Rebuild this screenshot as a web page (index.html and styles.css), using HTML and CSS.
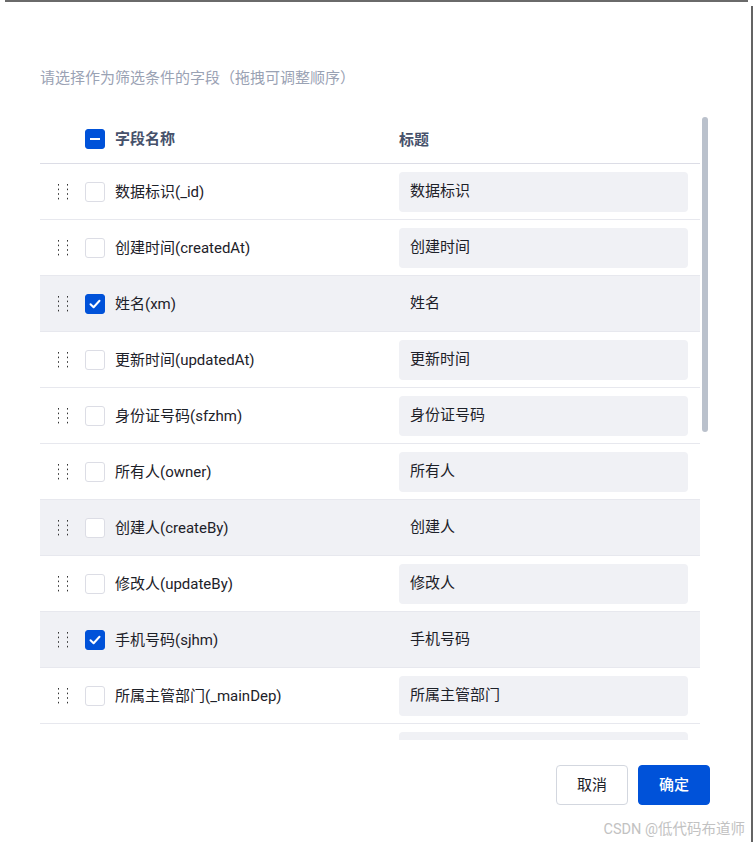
FILE: index.html
```html
<!DOCTYPE html>
<html lang="zh-CN">
<head>
    <meta charset="UTF-8">
    <meta name="viewport" content="width=device-width, initial-scale=1.0">
    <title>筛选字段设置</title>
    <link rel="stylesheet" href="styles.css">
</head>
<body>
    <div class="topline"></div>
    <div class="frame">
        <div class="dialog">
            <p class="hint">请选择作为筛选条件的字段（拖拽可调整顺序）</p>

            <div class="list-wrap">
                <div class="field-list">
                    <div class="row head">
                        <span class="handle-space"></span>
                        <span class="check indeterminate"><i></i></span>
                        <span class="name">字段名称</span>
                        <span class="title-col">标题</span>
                    </div>

                    <div class="row">
                        <span class="handle"><svg width="12" height="18" viewBox="0 0 12 18"><g fill="#333"><rect x="1" y="1" width="1" height="1.6"/><rect x="1" y="5.6" width="1" height="1.6"/><rect x="1" y="10.2" width="1" height="1.6"/><rect x="1" y="14.8" width="1" height="1.6"/><rect x="10" y="1" width="1" height="1.6"/><rect x="10" y="5.6" width="1" height="1.6"/><rect x="10" y="10.2" width="1" height="1.6"/><rect x="10" y="14.8" width="1" height="1.6"/></g></svg></span>
                        <span class="check"></span>
                        <span class="name">数据标识(_id)</span>
                        <span class="title-col"><span class="title-input">数据标识</span></span>
                    </div>
                    <div class="row">
                        <span class="handle"><svg width="12" height="18" viewBox="0 0 12 18"><g fill="#333"><rect x="1" y="1" width="1" height="1.6"/><rect x="1" y="5.6" width="1" height="1.6"/><rect x="1" y="10.2" width="1" height="1.6"/><rect x="1" y="14.8" width="1" height="1.6"/><rect x="10" y="1" width="1" height="1.6"/><rect x="10" y="5.6" width="1" height="1.6"/><rect x="10" y="10.2" width="1" height="1.6"/><rect x="10" y="14.8" width="1" height="1.6"/></g></svg></span>
                        <span class="check"></span>
                        <span class="name">创建时间(createdAt)</span>
                        <span class="title-col"><span class="title-input">创建时间</span></span>
                    </div>
                    <div class="row active">
                        <span class="handle"><svg width="12" height="18" viewBox="0 0 12 18"><g fill="#333"><rect x="1" y="1" width="1" height="1.6"/><rect x="1" y="5.6" width="1" height="1.6"/><rect x="1" y="10.2" width="1" height="1.6"/><rect x="1" y="14.8" width="1" height="1.6"/><rect x="10" y="1" width="1" height="1.6"/><rect x="10" y="5.6" width="1" height="1.6"/><rect x="10" y="10.2" width="1" height="1.6"/><rect x="10" y="14.8" width="1" height="1.6"/></g></svg></span>
                        <span class="check checked"><svg width="12" height="10" viewBox="0 0 12 10"><path d="M1.5 5.2 4.6 8.2 10.5 1.8" fill="none" stroke="#fff" stroke-width="2" stroke-linecap="round" stroke-linejoin="round"/></svg></span>
                        <span class="name">姓名(xm)</span>
                        <span class="title-col"><span class="title-input">姓名</span></span>
                    </div>
                    <div class="row">
                        <span class="handle"><svg width="12" height="18" viewBox="0 0 12 18"><g fill="#333"><rect x="1" y="1" width="1" height="1.6"/><rect x="1" y="5.6" width="1" height="1.6"/><rect x="1" y="10.2" width="1" height="1.6"/><rect x="1" y="14.8" width="1" height="1.6"/><rect x="10" y="1" width="1" height="1.6"/><rect x="10" y="5.6" width="1" height="1.6"/><rect x="10" y="10.2" width="1" height="1.6"/><rect x="10" y="14.8" width="1" height="1.6"/></g></svg></span>
                        <span class="check"></span>
                        <span class="name">更新时间(updatedAt)</span>
                        <span class="title-col"><span class="title-input">更新时间</span></span>
                    </div>
                    <div class="row">
                        <span class="handle"><svg width="12" height="18" viewBox="0 0 12 18"><g fill="#333"><rect x="1" y="1" width="1" height="1.6"/><rect x="1" y="5.6" width="1" height="1.6"/><rect x="1" y="10.2" width="1" height="1.6"/><rect x="1" y="14.8" width="1" height="1.6"/><rect x="10" y="1" width="1" height="1.6"/><rect x="10" y="5.6" width="1" height="1.6"/><rect x="10" y="10.2" width="1" height="1.6"/><rect x="10" y="14.8" width="1" height="1.6"/></g></svg></span>
                        <span class="check"></span>
                        <span class="name">身份证号码(sfzhm)</span>
                        <span class="title-col"><span class="title-input">身份证号码</span></span>
                    </div>
                    <div class="row">
                        <span class="handle"><svg width="12" height="18" viewBox="0 0 12 18"><g fill="#333"><rect x="1" y="1" width="1" height="1.6"/><rect x="1" y="5.6" width="1" height="1.6"/><rect x="1" y="10.2" width="1" height="1.6"/><rect x="1" y="14.8" width="1" height="1.6"/><rect x="10" y="1" width="1" height="1.6"/><rect x="10" y="5.6" width="1" height="1.6"/><rect x="10" y="10.2" width="1" height="1.6"/><rect x="10" y="14.8" width="1" height="1.6"/></g></svg></span>
                        <span class="check"></span>
                        <span class="name">所有人(owner)</span>
                        <span class="title-col"><span class="title-input">所有人</span></span>
                    </div>
                    <div class="row active">
                        <span class="handle"><svg width="12" height="18" viewBox="0 0 12 18"><g fill="#333"><rect x="1" y="1" width="1" height="1.6"/><rect x="1" y="5.6" width="1" height="1.6"/><rect x="1" y="10.2" width="1" height="1.6"/><rect x="1" y="14.8" width="1" height="1.6"/><rect x="10" y="1" width="1" height="1.6"/><rect x="10" y="5.6" width="1" height="1.6"/><rect x="10" y="10.2" width="1" height="1.6"/><rect x="10" y="14.8" width="1" height="1.6"/></g></svg></span>
                        <span class="check"></span>
                        <span class="name">创建人(createBy)</span>
                        <span class="title-col"><span class="title-input">创建人</span></span>
                    </div>
                    <div class="row">
                        <span class="handle"><svg width="12" height="18" viewBox="0 0 12 18"><g fill="#333"><rect x="1" y="1" width="1" height="1.6"/><rect x="1" y="5.6" width="1" height="1.6"/><rect x="1" y="10.2" width="1" height="1.6"/><rect x="1" y="14.8" width="1" height="1.6"/><rect x="10" y="1" width="1" height="1.6"/><rect x="10" y="5.6" width="1" height="1.6"/><rect x="10" y="10.2" width="1" height="1.6"/><rect x="10" y="14.8" width="1" height="1.6"/></g></svg></span>
                        <span class="check"></span>
                        <span class="name">修改人(updateBy)</span>
                        <span class="title-col"><span class="title-input">修改人</span></span>
                    </div>
                    <div class="row active">
                        <span class="handle"><svg width="12" height="18" viewBox="0 0 12 18"><g fill="#333"><rect x="1" y="1" width="1" height="1.6"/><rect x="1" y="5.6" width="1" height="1.6"/><rect x="1" y="10.2" width="1" height="1.6"/><rect x="1" y="14.8" width="1" height="1.6"/><rect x="10" y="1" width="1" height="1.6"/><rect x="10" y="5.6" width="1" height="1.6"/><rect x="10" y="10.2" width="1" height="1.6"/><rect x="10" y="14.8" width="1" height="1.6"/></g></svg></span>
                        <span class="check checked"><svg width="12" height="10" viewBox="0 0 12 10"><path d="M1.5 5.2 4.6 8.2 10.5 1.8" fill="none" stroke="#fff" stroke-width="2" stroke-linecap="round" stroke-linejoin="round"/></svg></span>
                        <span class="name">手机号码(sjhm)</span>
                        <span class="title-col"><span class="title-input">手机号码</span></span>
                    </div>
                    <div class="row">
                        <span class="handle"><svg width="12" height="18" viewBox="0 0 12 18"><g fill="#333"><rect x="1" y="1" width="1" height="1.6"/><rect x="1" y="5.6" width="1" height="1.6"/><rect x="1" y="10.2" width="1" height="1.6"/><rect x="1" y="14.8" width="1" height="1.6"/><rect x="10" y="1" width="1" height="1.6"/><rect x="10" y="5.6" width="1" height="1.6"/><rect x="10" y="10.2" width="1" height="1.6"/><rect x="10" y="14.8" width="1" height="1.6"/></g></svg></span>
                        <span class="check"></span>
                        <span class="name">所属主管部门(_mainDep)</span>
                        <span class="title-col"><span class="title-input">所属主管部门</span></span>
                    </div>
                    <div class="row">
                        <span class="handle"></span>
                        <span class="check"></span>
                        <span class="name"></span>
                        <span class="title-col"><span class="title-input"></span></span>
                    </div>
                </div>
                <div class="scroll-thumb"></div>
            </div>

            <div class="footer">
                <button class="btn">取消</button>
                <button class="btn primary">确定</button>
            </div>

            <span class="watermark">CSDN @低代码布道师</span>
        </div>
        <div class="edge"></div>
    </div>
</body>
</html>
```

FILE: styles.css
```css
body {
    margin: 0;
    background: #fff;
    font-family: "Roboto", "Noto Sans CJK SC", sans-serif;
    color: #1d2129;
}

.topline {
    height: 2px;
    margin: 0 5px;
    background: #6a6a6a;
}

.frame {
    display: flex;
    height: 840px;
}

.dialog {
    position: relative;
    flex: 1;
    padding: 64px 0 0 40px;
    box-sizing: border-box;
}

.edge {
    width: 2px;
    margin-top: 4px;
    background: #646464;
}

.hint {
    margin: 0;
    font-size: 15px;
    line-height: 24px;
    color: #9aa2b4;
}

.list-wrap {
    position: relative;
    margin-top: 25px;
    width: 670px;
}

.field-list {
    width: 660px;
    height: 625px;
    overflow: hidden;
}

/* custom scrollbar thumb, drawn over the list */
.scroll-thumb {
    position: absolute;
    left: 662px;
    top: 2px;
    width: 6px;
    height: 315px;
    border-radius: 3px;
    background: #bac1cc;
}

.row {
    display: flex;
    align-items: center;
    height: 56px;
    border-bottom: 1px solid #e7e8ee;
    box-sizing: border-box;
    font-size: 15px;
}

.row.head {
    height: 49px;
    padding-bottom: 2px;
    border-bottom-color: #dcdde6;
    font-weight: 600;
    color: #46516b;
}

.row.active {
    background: #f0f1f5;
}

.name {
    width: 284px;
    margin-bottom: 2px;
}

.handle,
.handle-space {
    width: 12px;
    height: 18px;
    margin-left: 17px;
    margin-right: 16px;
}

.handle svg {
    display: block;
}

.check {
    display: flex;
    align-items: center;
    justify-content: center;
    width: 20px;
    height: 20px;
    box-sizing: border-box;
    border: 1px solid #dcdde5;
    border-radius: 3px;
    background: #fff;
    margin-right: 10px;
}

.row.head .check {
    margin-top: 2px;
}

.check.checked,
.check.indeterminate {
    background: #0052d9;
    border-color: #0052d9;
}

.check.indeterminate i {
    width: 10px;
    height: 2px;
    background: #fff;
}

.title-col {
    flex: 1;
    padding-right: 12px;
}

.title-input {
    display: block;
    height: 40px;
    line-height: 38px;
    padding-left: 11px;
    background: #f0f1f5;
    border-radius: 4px;
}

.footer {
    display: flex;
    justify-content: flex-end;
    gap: 10px;
    margin-top: 25px;
    padding-right: 41px;
}

.btn {
    width: 72px;
    height: 40px;
    padding: 0 0 3px;
    font-family: inherit;
    font-size: 15px;
    color: #1d2129;
    background: #fff;
    border: 1px solid #d3d7df;
    border-radius: 4px;
}

.btn.primary {
    background: #0052d9;
    border-color: #0052d9;
    color: #fff;
    font-weight: 500;
}

.watermark {
    position: absolute;
    right: 6px;
    bottom: 4px;
    font-size: 14.5px;
    color: #c2c2c2;
}
```
